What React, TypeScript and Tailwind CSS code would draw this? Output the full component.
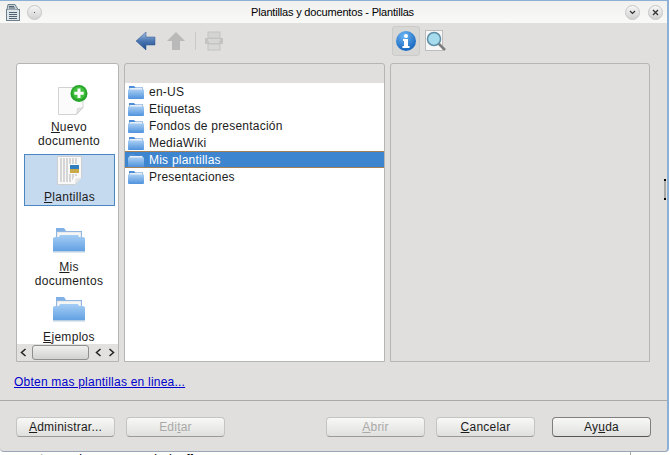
import type { ReactNode } from "react";

const FONT = "font-['Liberation_Sans',Arial,sans-serif]";

function Folder({ large = false }: { large?: boolean }) {
  if (large) {
    return (
      <svg width="32" height="26" viewBox="0 0 32 26" className="block">
        <defs>
          <linearGradient id="folderLg" x1="0" y1="0" x2="0" y2="1">
            <stop offset="0" stopColor="#a5cdf4" />
            <stop offset="1" stopColor="#5f9fe3" />
          </linearGradient>
        </defs>
        <path d="M3 1h8l2 3h16v8H3z" fill="#7fb1e6" />
        <rect x="4" y="5" width="24" height="9" fill="#f4f5f5" stroke="#c9ced3" strokeWidth="0.5" />
        <path d="M2 10h4l1-2h18l1 2h4l2 1v13a1 1 0 0 1-1 1H1a1 1 0 0 1-1-1V11z" fill="url(#folderLg)" />
        <rect x="0" y="24" width="32" height="1.5" fill="#bcd0e4" />
      </svg>
    );
  }
  return (
    <svg width="16" height="14" viewBox="0 0 16 14" className="block shrink-0">
      <defs>
        <linearGradient id="folderSm" x1="0" y1="0" x2="0" y2="1">
          <stop offset="0" stopColor="#a9cef3" />
          <stop offset="1" stopColor="#4f93dd" />
        </linearGradient>
      </defs>
      <path d="M1 1h5l1.500 1.500H15V6H1z" fill="#4d8ed6" />
      <rect x="1.500" y="3" width="13" height="2" fill="#e8eef5" />
      <path d="M0 4.500h16V13a1 1 0 0 1-1 1H1a1 1 0 0 1-1-1z" fill="url(#folderSm)" />
    </svg>
  );
}

function NewDocIcon() {
  return (
    <svg width="30" height="31" viewBox="0 0 30 31" className="ml-[7px] block">
      <path d="M0.500 2.500h24.500v20l-6.500 7H0.500z" fill="#fbfbfb" stroke="#d2d2d2" />
      <path d="M18.500 29.500l1-6 5.500-1z" fill="#e2e2e2" stroke="#c9c9c9" strokeWidth="0.5" />
      <circle cx="21" cy="8.500" r="8.500" fill="#27a52b" />
      <circle cx="21" cy="8" r="6.500" fill="#3fbf3c" />
      <path d="M21 3.500v9.500M16.300 8.300h9.400" stroke="#fff" strokeWidth="3" />
    </svg>
  );
}

function TemplateIcon() {
  return (
    <svg width="25" height="29" viewBox="0 0 25 29" className="block">
      <path d="M0.500 0.500h24v21l-6.500 7H0.500z" fill="#f8f8f8" stroke="#cfcfcf" />
      <path d="M18 28.500l0.500-6 6-0.500z" fill="#e4e4e4" />
      <path
        d="M3 3h18M3 5h18M3 7h18M3 9h8M3 11h8M3 13h8M3 15h8M3 17h8M3 19h17M3 21h15M3 23h13M3 25h11"
        stroke="#b3b3b3"
        strokeWidth="1"
        strokeDasharray="2 1"
      />
      <rect x="13" y="9" width="9" height="4" fill="#2f7fc0" />
      <rect x="13" y="13" width="9" height="4" fill="#c9a94a" />
    </svg>
  );
}

function ToolbarIcons() {
  return (
    <div className="flex h-full items-center pb-[4px]">
      <svg width="20" height="20" viewBox="0 0 20 20" className="ml-[136px] block">
        <defs>
          <linearGradient id="back" x1="0" y1="0" x2="0" y2="1">
            <stop offset="0" stopColor="#a7c0e0" />
            <stop offset="0.5" stopColor="#4a76b2" />
            <stop offset="1" stopColor="#1f4a8a" />
          </linearGradient>
        </defs>
        <path d="M0 10 L10 1 V6 H19 V14 H10 V19 Z" fill="url(#back)" stroke="#2c5692" strokeWidth="0.5" />
      </svg>
      <svg width="18" height="18" viewBox="0 0 18 18" className="ml-[11px] block">
        <path d="M9 0 L18 9 H13 V18 H5 V9 H0 Z" fill="#b9b9b9" />
      </svg>
      <div className="ml-[10px] h-[18px] w-px bg-[#c9c9c7]" />
      <svg width="20" height="20" viewBox="0 0 20 20" className="ml-2 block">
        <rect x="4" y="1" width="12" height="6" fill="#d4d4d2" stroke="#c4c4c2" />
        <rect x="1" y="7" width="18" height="6" fill="#c4c4c2" />
        <rect x="4" y="13" width="12" height="6" fill="#d8d8d6" stroke="#c4c4c2" />
        <path d="M4 9h12M5 11h10" stroke="#e8e8e6" />
      </svg>
      <div className="ml-[168px] flex h-[30px] w-[28px] items-center justify-center rounded-[3px] border border-[#cbcbc9] bg-[#d7d7d5]">
        <svg width="20" height="20" viewBox="0 0 20 20" className="block">
          <defs>
            <radialGradient id="info" cx="0.4" cy="0.25" r="0.85">
              <stop offset="0" stopColor="#6db4f2" />
              <stop offset="1" stopColor="#0a5cb8" />
            </radialGradient>
          </defs>
          <circle cx="10" cy="10" r="10" fill="url(#info)" />
          <circle cx="10" cy="5" r="2" fill="#fff" />
          <path d="M7 8h5v7h1.500v2h-7v-2H8v-5H7z" fill="#fff" />
        </svg>
      </div>
      <svg width="22" height="22" viewBox="0 0 22 22" className="ml-[5px] block">
        <rect x="0.500" y="0.500" width="17" height="20" fill="#f7f7f7" stroke="#bdbdbd" />
        <path d="M13 13l7 7" stroke="#7d7d7d" strokeWidth="2.500" />
        <circle cx="9" cy="9" r="6.500" fill="#a7dcef" stroke="#5f8ea5" strokeWidth="1.500" />
      </svg>
    </div>
  );
}

function Underlined({ pre = "", ch, post }: { pre?: string; ch: string; post: string }) {
  return (
    <>
      {pre}
      <span className="underline underline-offset-1">{ch}</span>
      {post}
    </>
  );
}

function Caret({ dir }: { dir: "left" | "right" }) {
  return (
    <svg width="7" height="9" viewBox="0 0 7 9" className="block">
      <path d={dir === "left" ? "M5.500 1 L1.500 4.500 L5.500 8" : "M1.500 1 L5.500 4.500 L1.500 8"} fill="none" stroke="#222" strokeWidth="1.500" />
    </svg>
  );
}

function Nav() {
  return (
    <div className="relative flex w-[103px] shrink-0 flex-col overflow-hidden rounded-t-[3px] border border-[#b5b5b3] bg-white tracking-[0.3px]">
      <div className="h-0 flex-1 overflow-hidden pl-[3px]">
        <div className="flex flex-col items-center">
          <div className="mt-[21px]">
            <NewDocIcon />
          </div>
          <div className="mt-[4px] text-center leading-[14px]">
            <Underlined ch="N" post="uevo" />
            <br />
            documento
          </div>
          <div className="ml-px mt-[6px] flex h-[52px] w-[91px] flex-col items-center border border-[#4a86c0] bg-[#c5d9ef]">
            <div className="mt-[1px]">
              <TemplateIcon />
            </div>
            <div className="mt-[5px] leading-[14px]">
              <Underlined ch="P" post="lantillas" />
            </div>
          </div>
          <div className="mt-[21px]">
            <Folder large />
          </div>
          <div className="mt-[7px] text-center leading-[14px]">
            <Underlined ch="M" post="is" />
            <br />
            documentos
          </div>
          <div className="mt-[8px]">
            <Folder large />
          </div>
          <div className="mt-[8px] leading-[14px]">
            <Underlined ch="E" post="jemplos" />
          </div>
        </div>
      </div>
      <div className="flex h-[17px] shrink-0 items-center bg-[#e2e1df]">
        <div className="ml-[3px]">
          <Caret dir="left" />
        </div>
        <div className="ml-[5px] h-[15px] w-[57px] rounded-[3px] border border-[#8f8f8d] bg-gradient-to-b from-[#f0f0ef] to-[#d2d2d0]" />
        <div className="ml-[6px]">
          <Caret dir="left" />
        </div>
        <div className="ml-[6px]">
          <Caret dir="right" />
        </div>
      </div>
    </div>
  );
}

const FOLDERS = ["en-US", "Etiquetas", "Fondos de presentación", "MediaWiki", "Mis plantillas", "Presentaciones"];

function FolderList() {
  return (
    <div className="ml-[5px] flex w-[261px] shrink-0 flex-col overflow-hidden rounded-t-[3px] border border-[#b5b5b3] bg-[#e0dfdd]">
      <div className="h-[19px] shrink-0" />
      <div className="flex-1 bg-white">
        {FOLDERS.map((name) => (
          <div
            key={name}
            className={`flex h-[17px] items-center gap-[5px] px-[3px] ${
              name === "Mis plantillas" ? "border-y border-[#a57f55] bg-[#3d85cf] text-white" : ""
            }`}
          >
            <Folder />
            <span>{name}</span>
          </div>
        ))}
      </div>
    </div>
  );
}

function Button({ children, disabled, dark, className = "" }: { children: ReactNode; disabled?: boolean; dark?: boolean; className?: string }) {
  return (
    <div
      className={`flex h-[20px] w-[99px] items-center justify-center rounded-[4px] border bg-gradient-to-b from-[#f8f8f7] to-[#e0e0de] pb-px ${
        dark ? "border-[#807f7d] border-b-[#555]" : "border-[#c4c4c2] border-b-[#9a9a98]"
      } ${disabled ? "text-[#a9a9a7]" : "text-[#1c1c1c]"} ${className}`}
    >
      {children}
    </div>
  );
}

function WinBtn({ children }: { children: ReactNode }) {
  return (
    <div className="flex h-[15px] w-[15px] items-center justify-center rounded-full border border-[#c6c6c6] bg-gradient-to-b from-[#f6f6f6] to-[#d2d2d2]">
      {children}
    </div>
  );
}

export default function App() {
  return (
    <div className={`relative h-[455px] w-[670px] overflow-hidden bg-white text-[12px] tracking-[0.22px] text-[#1c1c1c] ${FONT}`}>
      <div className="flex h-[452px] w-[669px] flex-col rounded-b-[4px] border-t border-r-2 border-b border-[#8db0d6] border-b-[#9aa5b5] bg-[#e0dfdd]">
        <div className="flex h-[22px] shrink-0 items-center bg-gradient-to-b from-[#f0f0ef] to-[#f9f9f8] pl-[5px] pr-[3px]">
          <svg width="16" height="18" viewBox="0 0 16 18" className="block">
            <rect x="1.500" y="6.500" width="13" height="11" fill="#dfe6ea" stroke="#6c7f8b" />
            <path d="M4 9.500h8M4 11.500h8M4 13.500h8M4 15.500h8" stroke="#50626f" />
            <path d="M2 6.500l1-5h7l3 5" fill="#c5d1d8" stroke="#6c7f8b" />
            <path d="M4 3.500h5M4 5h6" stroke="#50626f" />
          </svg>
          <div className="ml-[6px]">
            <WinBtn>
              <div className="h-[1px] w-[1px] bg-[#555]" />
            </WinBtn>
          </div>
          <div className="flex-1 pr-[2px] text-center text-[11px] tracking-[-0.18px] text-black">Plantillas y documentos - Plantillas</div>
          <div className="flex gap-[8px] pr-[1px]">
            <WinBtn>
              <svg width="7" height="5" viewBox="0 0 7 5">
                <path d="M1 1l2.500 2.500L6 1" fill="none" stroke="#333" strokeWidth="1.200" />
              </svg>
            </WinBtn>
            <WinBtn>
              <svg width="7" height="7" viewBox="0 0 7 7">
                <path d="M1 1l5 5M6 1L1 6" fill="none" stroke="#333" strokeWidth="1.300" />
              </svg>
            </WinBtn>
          </div>
        </div>
        <div className="h-[40px] shrink-0">
          <ToolbarIcons />
        </div>
        <div className="flex h-[299px] shrink-0 pl-[16px]">
          <Nav />
          <FolderList />
          <div className="ml-[5px] w-[260px] shrink-0 rounded-t-[3px] border border-[#b5b5b3] bg-[#e0dfdd]" />
          <div className="relative flex-1">
            <div className="absolute right-[1px] top-[116px] h-[21px] w-[2px] border-y-2 border-y-black bg-[#a9a9a7]" />
          </div>
        </div>
        <div className="flex h-[38px] shrink-0 items-center pl-[14px] pt-px">
          <span className="text-[#0000cc] underline">Obten mas plantillas en linea...</span>
        </div>
        <div className="h-px shrink-0 bg-[#a9a9a7]" />
        <div className="flex flex-1 items-start pl-[16px] pt-[16px]">
          <Button>
            <Underlined ch="A" post="dministrar..." />
          </Button>
          <Button disabled className="ml-[11px] w-[98px]">
            <Underlined pre="Edi" ch="t" post="ar" />
          </Button>
          <Button disabled className="ml-[101px] w-[99px]">
            <Underlined ch="A" post="brir" />
          </Button>
          <Button className="ml-[11px]">
            <Underlined ch="C" post="ancelar" />
          </Button>
          <Button dark className="ml-[17px]">
            <Underlined pre="Ay" ch="u" post="da" />
          </Button>
        </div>
      </div>
      {/* the window behind shows through under the dialog */}
      <div className="relative flex h-[13px] pl-[40px] text-[13px] leading-none tracking-normal text-black">
        <span>t</span>
        <span className="ml-[31px]">d</span>
        <span className="ml-[68px]">d</span>
        <span className="ml-[12px]">l</span>
        <span className="ml-[14px]">ff</span>
        <div className="absolute left-[630px] top-0 h-[3px] w-px bg-[#a9a9a7]" />
      </div>
    </div>
  );
}
